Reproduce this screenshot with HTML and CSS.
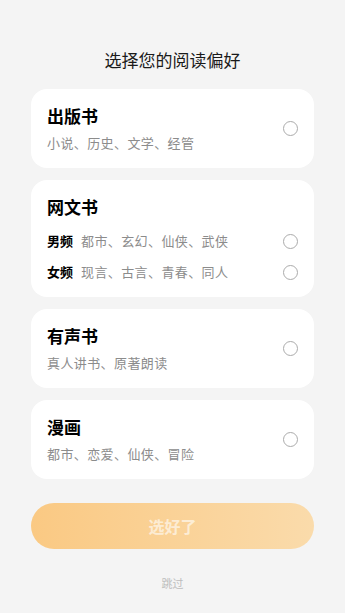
FILE: index.html
```html
<!DOCTYPE html>
<html lang="zh">
<head>
<meta charset="utf-8">
<link rel="stylesheet" href="styles.css">
</head>
<body>
<div class="page">
  <h1 class="heading">选择您的阅读偏好</h1>
  <div class="cards">
    <div class="card">
      <div class="card-body">
        <div class="card-title">出版书</div>
        <div class="card-sub">小说、历史、文学、经管</div>
      </div>
      <span class="radio"></span>
    </div>
    <div class="card card-multi">
      <div class="card-title">网文书</div>
      <div class="rows">
        <div class="row">
          <span class="row-label">男频</span>
          <span class="row-text">都市、玄幻、仙侠、武侠</span>
          <span class="radio"></span>
        </div>
        <div class="row">
          <span class="row-label">女频</span>
          <span class="row-text">现言、古言、青春、同人</span>
          <span class="radio"></span>
        </div>
      </div>
    </div>
    <div class="card">
      <div class="card-body">
        <div class="card-title">有声书</div>
        <div class="card-sub">真人讲书、原著朗读</div>
      </div>
      <span class="radio"></span>
    </div>
    <div class="card">
      <div class="card-body">
        <div class="card-title">漫画</div>
        <div class="card-sub">都市、恋爱、仙侠、冒险</div>
      </div>
      <span class="radio"></span>
    </div>
  </div>
  <button class="confirm">选好了</button>
  <div class="skip">跳过</div>
</div>
</body>
</html>
```
FILE: styles.css
```css
html, body {
  margin: 0;
  padding: 0;
  background: #f4f4f4;
}
body {
  font-family: "Noto Sans CJK SC", "Noto Sans", sans-serif;
  width: 345px;
  height: 613px;
  overflow: hidden;
}
.page {
  display: flex;
  flex-direction: column;
  padding: 48px 31px 0;
}
.heading {
  margin: 0 0 17px;
  font-size: 17px;
  line-height: 24px;
  font-weight: 400;
  color: #1a1a1a;
  text-align: center;
}
.cards {
  display: flex;
  flex-direction: column;
  gap: 12px;
}
.card {
  background: #fff;
  border-radius: 16px;
  padding: 15px 16px 15px;
  display: flex;
  align-items: center;
  justify-content: space-between;
}
.card-multi {
  display: block;
}
.card-title {
  font-size: 17px;
  line-height: 24px;
  font-weight: 700;
  color: #000;
}
.card-sub {
  margin-top: 5px;
  font-size: 13px;
  line-height: 20px;
  letter-spacing: 0.4px;
  color: #8c8c8c;
}
.radio {
  width: 13px;
  height: 13px;
  border: 1px solid #ababab;
  border-radius: 50%;
  flex: none;
  box-sizing: content-box;
}
.rows {
  margin-top: 12px;
  display: flex;
  flex-direction: column;
  gap: 11px;
}
.row {
  display: flex;
  align-items: center;
  line-height: 20px;
  font-size: 13px;
}
.row-label {
  font-weight: 700;
  color: #000;
  margin-right: 8px;
}
.row-text {
  color: #8c8c8c;
  letter-spacing: 0.4px;
  flex: 1;
}
.confirm {
  margin-top: 24px;
  height: 46px;
  border: none;
  border-radius: 23px;
  background: linear-gradient(90deg, #fac983 0%, #fadbab 100%);
  color: rgba(255, 255, 255, 0.6);
  font-family: inherit;
  font-size: 16px;
  font-weight: 700;
  padding: 0;
}
.skip {
  margin-top: 26px;
  text-align: center;
  font-size: 11px;
  line-height: 16px;
  color: #bdbdbd;
}
```
